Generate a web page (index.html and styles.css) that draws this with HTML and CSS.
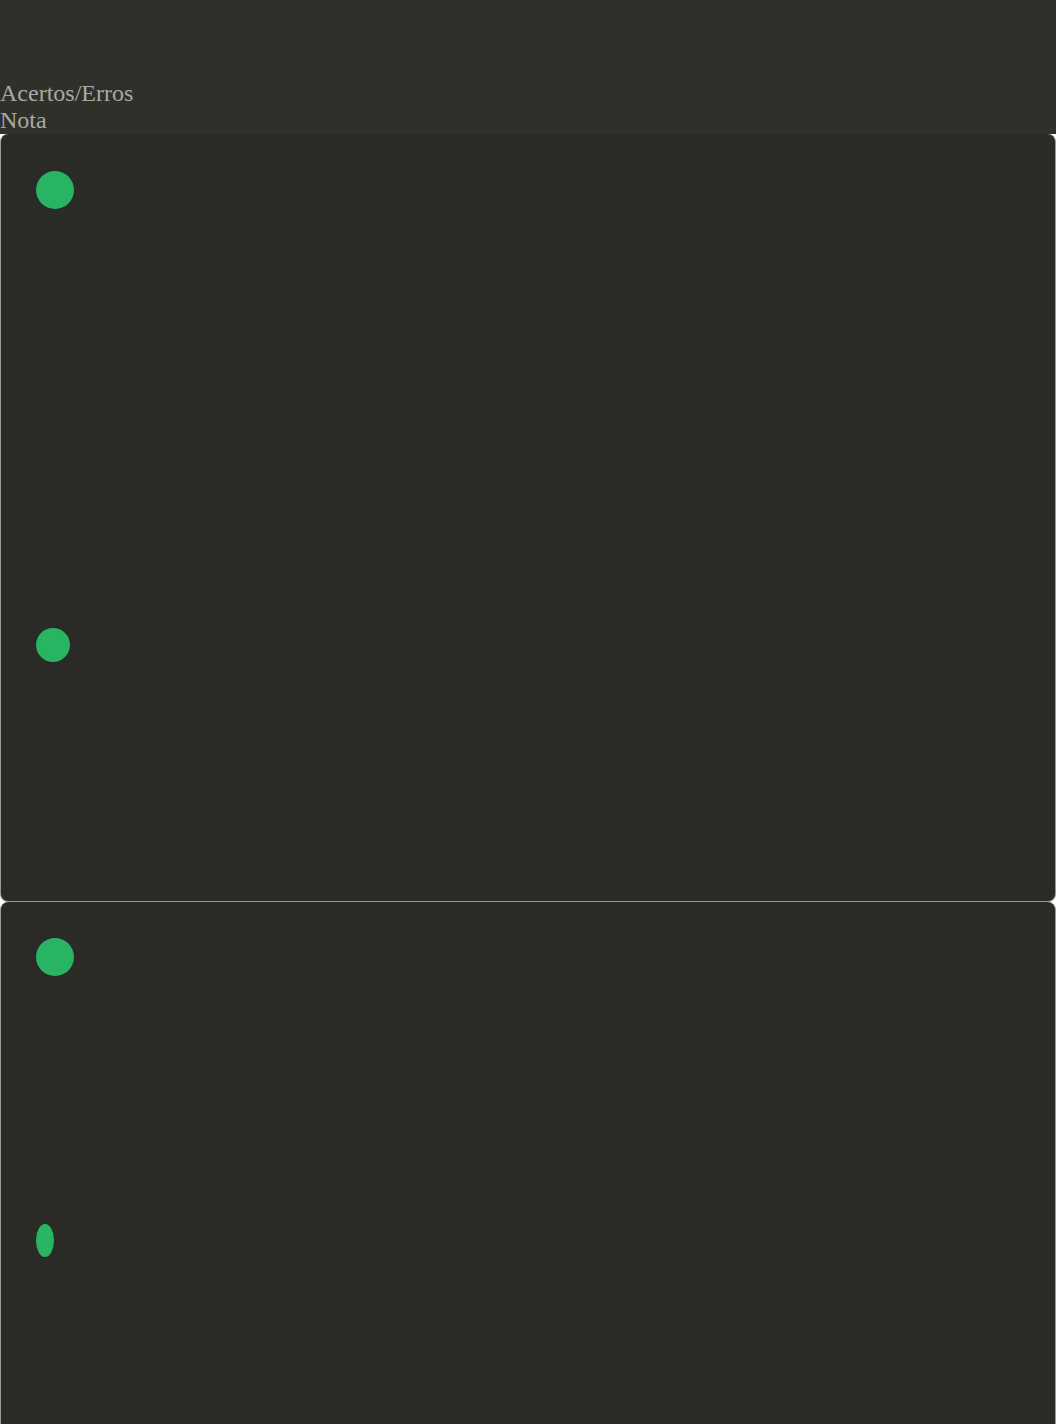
FILE: index.html
```html
<!DOCTYPE html>
<html lang="pt">
<head>
<meta charset="utf-8">
<title>Resultado</title>
<link rel="stylesheet" href="styles.css">
</head>
<body>
<header class="header">
  <div class="label">Acertos/Erros</div>
  <div class="label">Nota</div>
</header>
<section class="card card-one">
  <div class="dot dot-lg"></div>
  <div class="dot dot-md"></div>
</section>
<section class="card card-two">
  <div class="dot dot-lg"></div>
  <div class="dot dot-oval"></div>
</section>
</body>
</html>
```
FILE: styles.css
```css
html, body {
  margin: 0;
  padding: 0;
  background: #ffffff;
}
body {
  font-family: "Liberation Serif", "Times New Roman", serif;
}
.header {
  background: #30302b;
  height: 134px;
  box-sizing: border-box;
  padding-top: 80px;
}
.label {
  color: #a9a9a4;
  font-size: 24px;
  line-height: 27px;
}
.card {
  background: #2a2a26;
  border: 1px solid #9a9a94;
  border-top: none;
  border-radius: 8px;
  box-sizing: border-box;
  padding: 37px 35px 0;
  display: flex;
  flex-direction: column;
  align-items: flex-start;
}
.card-one {
  height: 768px;
}
.card-two {
  height: 560px;
  padding-top: 36px;
}
.dot {
  background: #28b463;
  border-radius: 50%;
  flex: none;
}
.dot-lg {
  width: 38px;
  height: 38px;
}
.card-one .dot-md {
  width: 34px;
  height: 34px;
  margin-top: 419px;
}
.dot-oval {
  width: 18px;
  height: 33px;
  margin-top: 248px;
}
```
